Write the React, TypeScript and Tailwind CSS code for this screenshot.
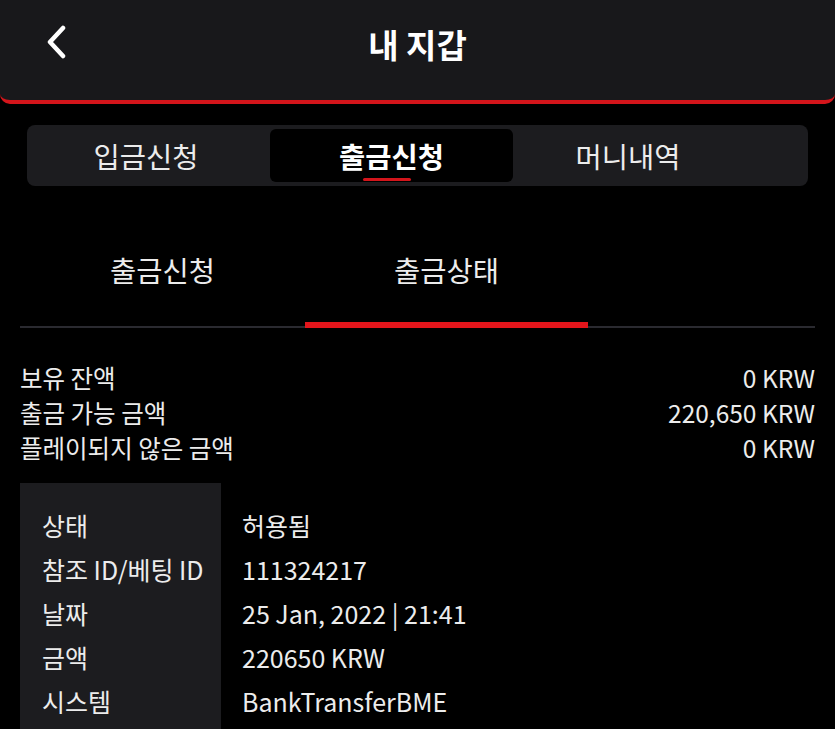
const font = { fontFamily: '"Noto Sans CJK KR", "Noto Sans", sans-serif' };

const balances = [
  { label: '보유 잔액', value: '0 KRW' },
  { label: '출금 가능 금액', value: '220,650 KRW' },
  { label: '플레이되지 않은 금액', value: '0 KRW' },
];

const details = [
  { label: '상태', value: '허용됨' },
  { label: '참조 ID/베팅 ID', value: '111324217' },
  { label: '날짜', value: '25 Jan, 2022 | 21:41' },
  { label: '금액', value: '220650 KRW' },
  { label: '시스템', value: 'BankTransferBME' },
];

export default function App() {
  return (
    <div className="min-h-[729px] w-[835px] overflow-hidden bg-black text-white" style={font}>
      {/* header */}
      <div className="relative flex h-[104px] items-center rounded-b-[10px] border-b-4 border-[#d4151b] bg-[#18181b] px-[44px]">
        <svg width="24" height="34" viewBox="0 0 24 34" className="mb-[16px]">
          <path d="M19 3 L6 17 L19 31" stroke="white" strokeWidth="4.5" fill="none" strokeLinecap="round" strokeLinejoin="round" />
        </svg>
        <h1 className="absolute left-0 right-0 top-[22px] text-center text-[33px] font-bold leading-[44px]">내 지갑</h1>
      </div>

      {/* main tabs */}
      <div className="mx-[27px] mt-[21px] flex h-[61px] items-center rounded-[8px] bg-[#1c1c1f] px-[3px]">
        <div className="flex w-[240px] items-center justify-center pr-[8px] text-[28.5px] leading-[53px] text-[#ececec]">입금신청</div>
        <div className="relative flex h-[53px] w-[243px] items-center justify-center rounded-[6px] bg-black text-[28.5px] font-bold leading-[53px]">
          출금신청
          <span className="absolute bottom-[1px] left-[93px] h-[3px] w-[48px] rounded-sm bg-[#d4151b]" />
        </div>
        <div className="flex w-[230px] items-center justify-center text-[28.5px] leading-[53px] text-[#ececec]">머니내역</div>
      </div>

      {/* sub tabs */}
      <div className="mx-[20px] mt-[52px] flex border-b-2 border-[#2a2a30]">
        <div className="flex h-[88px] w-[285px] items-start justify-center pt-[11px] text-[28.5px] text-[#ececec]">출금신청</div>
        <div className="relative flex h-[88px] w-[283px] items-start justify-center pt-[11px] text-[28.5px] text-[#ececec]">
          출금상태
          <span className="absolute bottom-[-2px] left-0 right-0 h-[6px] bg-[#e3151b]" />
        </div>
      </div>

      {/* balances */}
      <div className="mx-[20px] mt-[33px] flex flex-col">
        {balances.map((b) => (
          <div key={b.label} className="flex h-[35px] items-center justify-between text-[24.5px] text-[#ececec]">
            <span>{b.label}</span>
            <span>{b.value}</span>
          </div>
        ))}
      </div>

      {/* details */}
      <div className="ml-[20px] mt-[17px] flex">
        <div className="flex w-[201px] flex-col bg-[#1c1c1f] pt-[20px] pb-[20px] pl-[22px]">
          {details.map((d) => (
            <div key={d.label} className="h-[44px] text-[25px] leading-[44px] text-[#ececec]">{d.label}</div>
          ))}
        </div>
        <div className="flex flex-col pt-[20px] pl-[21px]">
          {details.map((d) => (
            <div key={d.label} className="h-[44px] text-[25px] leading-[44px] text-[#ececec]">{d.value}</div>
          ))}
        </div>
      </div>
    </div>
  );
}
